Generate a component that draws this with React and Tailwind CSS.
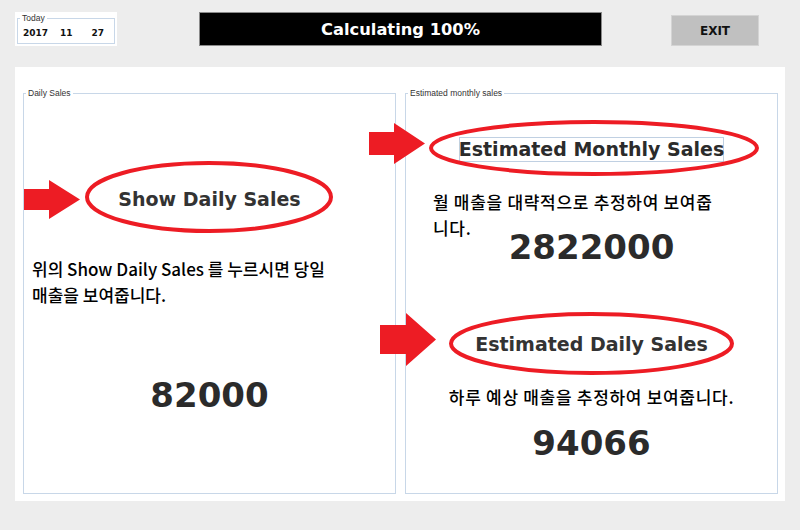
import React from "react";

function Arrow({ className, w, h, shaftH, shaftL }) {
  const t = (h - shaftH) / 2;
  return (
    <svg className={className} width={w} height={h} viewBox={`0 0 ${w} ${h}`}>
      <polygon
        points={`0,${t} ${shaftL},${t} ${shaftL},0 ${w},${h / 2} ${shaftL},${h} ${shaftL},${h - t} 0,${h - t}`}
        fill="#ed1c24"
      />
    </svg>
  );
}

function Ellipse({ className, w, h }) {
  return (
    <svg className={className} width={w} height={h} viewBox={`0 0 ${w} ${h}`}>
      <ellipse cx={w / 2} cy={h / 2} rx={w / 2 - 2} ry={h / 2 - 2} fill="none" stroke="#ed1c24" strokeWidth="4" />
    </svg>
  );
}

const heading = "font-['DejaVu_Sans',sans-serif] font-bold";
const kr = "font-['Noto_Sans_CJK_KR','Noto_Sans',sans-serif]";
const legend =
  "absolute left-[2px] top-[-7px] bg-white px-[2px] text-[8.5px] leading-[12px] text-[#333] font-['Liberation_Sans',sans-serif]";

export default function App() {
  return (
    <div className="w-[800px] h-[530px] bg-[#ededed] overflow-hidden">
      {/* top row */}
      <div className="flex items-start pt-[12px]">
        <div className="ml-[15px] w-[102px] h-[34px] bg-white pt-[6px] pl-[2px]">
          <div className="relative w-[98px] h-[26px] border border-[#c8d7e8]">
            <span className={legend}>Today</span>
            <div className={`${heading} text-[9px] leading-[12px] text-[#111] flex pt-[8px]`}>
              <span className="ml-[5px]">2017</span>
              <span className="ml-[12px]">11</span>
              <span className="ml-[19px]">27</span>
            </div>
          </div>
        </div>
        <div className={`ml-[82px] w-[403px] h-[34px] bg-black border border-[#8a8a8a] flex items-center justify-center pt-[2px] text-white text-[16.3px] ${heading}`}>
          Calculating 100%
        </div>
        <div className={`ml-[69px] mt-[3px] w-[88px] h-[31px] bg-[#c0c0c0] border border-[#d4d4d4] flex items-center justify-center text-[12px] text-[#111] ${heading}`}>
          EXIT
        </div>
      </div>

      {/* main panel */}
      <div className="relative ml-[15px] mt-[21px] w-[770px] h-[434px] bg-white flex pl-[8px] pt-[26px] gap-[9px]">
        {/* left box */}
        <div className="relative w-[373px] h-[401px] border border-[#c8d7e8] flex flex-col">
          <span className={legend}>Daily Sales</span>
          <div className={`mt-[94px] text-center text-[19px] leading-[23px] text-[#333] ${heading}`}>
            Show Daily Sales
          </div>
          <p className={`mt-[45px] pl-[8px] text-[17px] leading-[26px] font-medium text-black ${kr}`}>
            위의 Show Daily Sales 를 누르시면 당일
            <br />
            매출을 보여줍니다.
          </p>
          <div className={`mt-[67px] text-center text-[34px] leading-[40px] text-[#2b2b2b] ${heading}`}>82000</div>
        </div>

        {/* right box */}
        <div className="relative w-[373px] h-[401px] border border-[#c8d7e8] flex flex-col items-center">
          <span className={legend}>Estimated monthly sales</span>
          <div className={`mt-[43px] w-[265px] h-[25px] border border-[#c0d0e2] flex items-center justify-center whitespace-nowrap text-[19px] leading-[23px] text-[#2b2b2b] ${heading}`}>
            Estimated Monthly Sales
          </div>
          <p className={`self-start mt-[27px] pl-[27px] text-[17px] leading-[26px] tracking-[0.7px] font-medium text-black ${kr}`}>
            월 매출을 대략적으로 추정하여 보여줍
            <br />
            니다.
          </p>
          <div className={`mt-[-14px] text-center text-[34px] leading-[40px] text-[#2b2b2b] ${heading}`}>2822000</div>
          <div className={`mt-[66px] text-center text-[19px] leading-[23px] text-[#333] ${heading}`}>
            Estimated Daily Sales
          </div>
          <p className={`mt-[28px] text-[17px] leading-[26px] tracking-[0.7px] font-medium text-black ${kr}`}>
            하루 예상 매출을 추정하여 보여줍니다.
          </p>
          <div className={`mt-[13px] text-center text-[34px] leading-[40px] text-[#2b2b2b] ${heading}`}>94066</div>
        </div>

        {/* annotations */}
        <Arrow className="absolute left-[9px] top-[113px]" w={56} h={39} shaftH={21} shaftL={25} />
        <Ellipse className="absolute left-[70px] top-[94px]" w={248} h={72} />
        <Arrow className="absolute left-[354px] top-[56px]" w={56} h={41} shaftH={23} shaftL={25} />
        <Ellipse className="absolute left-[414px] top-[53px]" w={330} h={56} />
        <Arrow className="absolute left-[365px] top-[246px]" w={56} h={53} shaftH={29} shaftL={26} />
        <Ellipse className="absolute left-[434px] top-[245px]" w={285} h={63} />
      </div>
    </div>
  );
}
